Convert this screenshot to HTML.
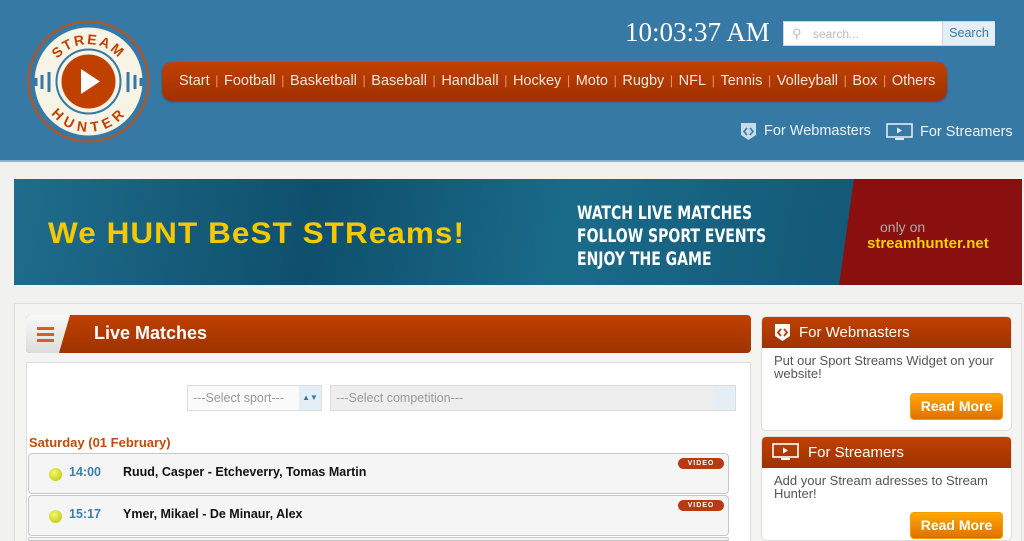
<!DOCTYPE html>
<html style="overflow:hidden;height:541px"><head><meta charset="utf-8"><style>
*{box-sizing:border-box;margin:0;padding:0}
body{width:1024px;height:541px;overflow:hidden;background:#f1f1ef;font-family:"Liberation Sans",sans-serif;position:relative}
.abs{position:absolute}
#hdr{left:0;top:0;width:1024px;height:162px;background:#3779a5;border-bottom:2px solid #8fb4cc}
#nav{left:162px;top:62px;width:785px;height:39px;border-radius:10px;background:linear-gradient(#c04000,#a03000);color:#f3e6d8;font-size:14.5px;line-height:37px;padding-left:17px;white-space:nowrap;box-shadow:0 1px 2px rgba(0,0,0,.3)}
#nav i{font-style:normal;color:#e09070;margin:0 5.5px;font-size:13px}
.hd{background:linear-gradient(#c04000,#9e3300);color:#fff}
.row{left:28px;width:701px;height:41px;background:#f5f5f5;border:1px solid #c8c8c8;border-radius:4px;font-size:12.5px;font-weight:bold}
.ball{position:absolute;left:20px;top:14px;width:13px;height:13px;border-radius:50%;background:radial-gradient(circle at 40% 35%,#f4f870,#b8c000)}
.tm{position:absolute;left:40px;top:11px;color:#3a7fb0}
.nm{position:absolute;left:94px;top:11px;color:#111}
.vid{position:absolute;right:4px;top:4px;width:46px;height:11px;border-radius:6px;background:#b83a10;color:#fff;font-size:7px;line-height:11px;text-align:center;letter-spacing:1px}
.btn{background:linear-gradient(#ffa800,#e07000);border:1px solid #f0a000;border-radius:4px;color:#fff;font-weight:bold;font-size:14px;text-align:center;line-height:25px;width:93px;height:27px}
.side{left:761px;width:251px;background:#fff;border:1px solid #ddd;border-radius:5px;overflow:hidden}
.side .hd{height:31px;font-size:15px;line-height:31px;padding-left:37px;position:relative}
.side p{font-size:13px;color:#555;padding:6px 12px;line-height:13px}
</style></head><body>
<div id="hdr" class="abs"></div>
<svg class="abs" style="left:27px;top:20px" width="123" height="123" viewBox="0 0 123 123">
<circle cx="61.5" cy="61.5" r="60" fill="#3779a5" stroke="#c0501a" stroke-width="2"/>
<circle cx="61.5" cy="61.5" r="54" fill="#f7f4e6"/>
<circle cx="61.5" cy="61.5" r="32" fill="none" stroke="#3779a5" stroke-width="2"/>
<circle cx="61.5" cy="61.5" r="27" fill="#c04000"/>
<path d="M54 49 L73 61.5 L54 74Z" fill="#fff"/>
<g stroke="#3779a5" stroke-width="3" fill="none"><path d="M22 52v20M15 55v14M9 58v8M101 52v20M108 55v14M114 58v8"/></g>
<path id="ta" d="M22 58 A40 40 0 0 1 101 58" fill="none"/>
<path id="tb" d="M24 70 A38 38 0 0 0 99 70" fill="none"/>
<text font-size="14" font-weight="bold" fill="#c04000" font-family="Liberation Sans" letter-spacing="2"><textPath href="#ta" startOffset="50%" text-anchor="middle">STREAM</textPath></text>
<text font-size="14" font-weight="bold" fill="#c04000" font-family="Liberation Sans" letter-spacing="2" dy="10"><textPath href="#tb" startOffset="50%" text-anchor="middle">HUNTER</textPath></text>
</svg>
<div class="abs" style="left:625px;top:17px;font-family:'Liberation Serif',serif;font-size:27px;color:#fff">10:03:37 AM</div>
<div class="abs" style="left:783px;top:21px;width:212px;height:25px;background:#fff;border:1px solid #c9d6e0">
<span class="abs" style="left:8px;top:4px;color:#bbb;font-size:13px">&#9906;</span>
<span class="abs" style="left:29px;top:5px;color:#bbb;font-size:12px">search...</span>
<div class="abs" style="left:158px;top:0;width:53px;height:23px;background:#e4eef6;border-left:1px solid #c9d6e0;color:#3779a5;font-size:12.5px;line-height:23px;text-align:center">Search</div></div>
<div id="nav" class="abs">Start<i>|</i>Football<i>|</i>Basketball<i>|</i>Baseball<i>|</i>Handball<i>|</i>Hockey<i>|</i>Moto<i>|</i>Rugby<i>|</i>NFL<i>|</i>Tennis<i>|</i>Volleyball<i>|</i>Box<i>|</i>Others</div>
<svg class="abs" style="left:740px;top:122px" width="17" height="19"><path d="M1 1h15v12l-7.5 5-7.5-5z" fill="#c8dbe8"/><path d="M7 6l-3 3.5 3 3.5M10 6l3 3.5-3 3.5" stroke="#3779a5" stroke-width="1.6" fill="none"/></svg>
<div class="abs" style="left:764px;top:123px;color:#eef4f8;font-size:14.5px">For Webmasters</div>
<svg class="abs" style="left:886px;top:123px" width="27" height="19"><rect x="1" y="1" width="25" height="13" fill="none" stroke="#e0eaf2" stroke-width="1.6"/><path d="M11 4.5l5 3-5 3z" fill="#e0eaf2"/><rect x="9" y="15" width="9" height="2" fill="#e0eaf2"/></svg>
<div class="abs" style="left:920px;top:124px;color:#eef4f8;font-size:14.5px">For Streamers</div>
<div class="abs" style="left:14px;top:179px;width:1008px;height:106px;background:linear-gradient(100deg,#1f6d8c,#0e4f6c 30%,#1a6b8a 55%,#145a78 80%);overflow:hidden">
<div class="abs" style="left:825px;top:0;width:200px;height:106px;background:#8a1010;transform:skewX(-8deg);transform-origin:bottom"></div>
<div class="abs" style="left:34px;top:38px;font-family:'Liberation Sans',sans-serif;font-weight:bold;font-size:30px;color:#f5c800;letter-spacing:1px;transform:scaleX(1.05);transform-origin:left">We HUNT BeST STReams!</div>
<div class="abs" style="left:563px;top:23px;color:#fff;font-weight:bold;font-size:19px;line-height:23px;transform:scaleX(.82);transform-origin:left;font-family:'DejaVu Sans Condensed','Liberation Sans',sans-serif">WATCH LIVE MATCHES<br>FOLLOW SPORT EVENTS<br>ENJOY THE GAME</div>
<div class="abs" style="left:866px;top:40px;color:#aaa;font-size:14px">only on</div>
<div class="abs" style="left:853px;top:56px;color:#f5d000;font-size:15px;font-weight:bold">streamhunter.net</div>
</div>
<div class="abs" style="left:14px;top:303px;width:1008px;height:250px;border:1px solid #ddd;background:#f4f4f2"></div>
<div class="abs hd" style="left:26px;top:315px;width:725px;height:38px;border-radius:4px;font-size:18px;font-weight:bold;line-height:37px;padding-left:68px">Live Matches</div>
<div class="abs" style="left:26px;top:315px;width:44px;height:38px;background:linear-gradient(#f8f8f8,#ddd);clip-path:polygon(0 0,100% 0,75% 100%,0 100%);border-radius:4px 0 0 4px"></div>
<div class="abs" style="left:37px;top:327px;width:17px;height:3px;background:#d0602a;box-shadow:0 6px 0 #d0602a,0 12px 0 #d0602a"></div>
<div class="abs" style="left:26px;top:362px;width:725px;height:190px;background:#fff;border:1px solid #ddd"></div>
<div class="abs" style="left:187px;top:385px;width:135px;height:26px;border:1px solid #ddd;background:#fafafa;color:#999;font-size:12.5px;line-height:24px;padding-left:5px">---Select sport---<span class="abs" style="right:0;top:0;width:22px;height:24px;background:#e4eef6;color:#3779a5;font-size:8px;text-align:center">&#9650;&#9660;</span></div>
<div class="abs" style="left:330px;top:385px;width:406px;height:26px;border:1px solid #ddd;background:#eee;color:#999;font-size:12.5px;line-height:24px;padding-left:5px">---Select competition---<span class="abs" style="right:0;top:0;width:22px;height:24px;background:#e4eef6"></span></div>
<div class="abs" style="left:29px;top:435px;color:#c24a0a;font-size:13px;font-weight:bold">Saturday (01 February)</div>
<div class="abs row" style="top:453px"><div class="ball"></div><span class="tm">14:00</span><span class="nm">Ruud, Casper - Etcheverry, Tomas Martin</span><div class="vid">VIDEO</div></div>
<div class="abs row" style="top:495px"><div class="ball"></div><span class="tm">15:17</span><span class="nm">Ymer, Mikael - De Minaur, Alex</span><div class="vid">VIDEO</div></div>
<div class="abs row" style="top:537px;height:4px"></div>
<div class="abs side" style="top:316px;height:115px"><div class="hd">For Webmasters<svg class="abs" style="left:12px;top:6px" width="17" height="20"><path d="M1 1h15v12l-7.5 5-7.5-5z" fill="#fff"/><path d="M7 6l-3 3.5 3 3.5M10 6l3 3.5-3 3.5" stroke="#b83a00" stroke-width="1.8" fill="none"/></svg></div><p>Put our Sport Streams Widget on your website!</p><div class="abs btn" style="left:148px;top:76px">Read More</div></div>
<div class="abs side" style="top:436px;height:105px"><div class="hd" style="padding-left:46px">For Streamers<svg class="abs" style="left:10px;top:6px" width="28" height="20"><rect x="1" y="1" width="25" height="13" fill="none" stroke="#fff" stroke-width="1.6"/><path d="M11 4.5l5 3-5 3z" fill="#fff"/><rect x="9" y="15" width="9" height="2" fill="#fff"/></svg></div><p>Add your Stream adresses to Stream Hunter!</p><div class="abs btn" style="left:148px;top:75px">Read More</div></div>
</body></html>
